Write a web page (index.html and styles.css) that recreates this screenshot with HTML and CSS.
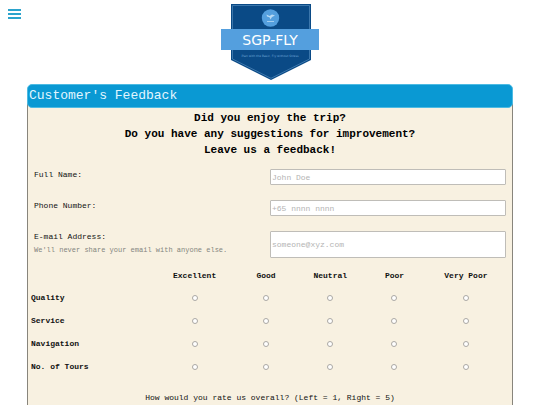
FILE: index.html
```html
<!DOCTYPE html>
<html lang="en">
<head>
    <meta charset="UTF-8">
    <meta name="viewport" content="width=device-width, initial-scale=1.0">
    <title>SGP-FLY | Customer's Feedback</title>
    <link rel="stylesheet" href="styles.css">
</head>
<body>

    <!-- Menu button and logo -->
    <header class="topbar">
        <button type="button" class="menu-btn" aria-label="Open menu">
            <span></span>
            <span></span>
            <span></span>
        </button>
        <a class="logo" href="#">
            <svg width="98" height="77" viewBox="0 0 98 77" role="img" aria-label="SGP-FLY">
                <path d="M10 0H90V56L50 76L10 56Z" fill="#0a4a86"/>
                <path d="M11.500 1.500H88.500V55L50 74.300L11.500 55Z" fill="none" stroke="#5c93c4" stroke-width="0.600"/>
                <circle cx="49.500" cy="14" r="8.700" fill="#549fde"/>
                <path d="M45.500 10.500L48.500 12L51 10.500L54 11.500L51 13L49.500 15.500L48.500 13.200L46 12.600Z" fill="#b9daf4"/>
                <path d="M46 17.500H53" stroke="#b9daf4" stroke-width="0.800"/>
                <rect x="0" y="25" width="98" height="21" fill="#549fde"/>
                <text class="logo-name" x="49" y="41" text-anchor="middle">SGP-FLY</text>
                <text class="logo-tagline" x="49" y="53" text-anchor="middle">Plan with the Basic, Fly without Stress</text>
            </svg>
        </a>
    </header>

    <main class="container">
        <h1 class="form-title">Customer's Feedback</h1>

        <form class="feedback-form" action="#" method="POST">
            <h2 class="intro">
                Did you enjoy the trip?<br>
                Do you have any suggestions for improvement?<br>
                Leave us a feedback!
            </h2>

            <!-- Contact details -->
            <div class="fields">
                <div class="field">
                    <label for="name">Full Name:</label>
                    <input type="text" id="name" name="name" placeholder="John Doe">
                </div>
                <div class="field">
                    <label for="phone">Phone Number:</label>
                    <input type="tel" id="phone" name="phone" placeholder="+65 nnnn nnnn">
                </div>
                <div class="field">
                    <div>
                        <label for="email">E-mail Address:</label>
                        <small id="emailHelp">We'll never share your email with anyone else.</small>
                    </div>
                    <input type="email" id="email" name="email" placeholder="someone@xyz.com" aria-describedby="emailHelp">
                </div>
            </div>

            <!-- Ratings -->
            <table class="ratings">
                <thead>
                    <tr>
                        <td class="topic"></td>
                        <th scope="col" class="wide">Excellent</th>
                        <th scope="col">Good</th>
                        <th scope="col" class="narrow">Neutral</th>
                        <th scope="col">Poor</th>
                        <th scope="col" class="wide">Very Poor</th>
                    </tr>
                </thead>
                <tbody>
                    <tr>
                        <th scope="row">Quality</th>
                        <td><input type="radio" name="quality" value="5" aria-label="Quality: Excellent"></td>
                        <td><input type="radio" name="quality" value="4" aria-label="Quality: Good"></td>
                        <td><input type="radio" name="quality" value="3" aria-label="Quality: Neutral"></td>
                        <td><input type="radio" name="quality" value="2" aria-label="Quality: Poor"></td>
                        <td><input type="radio" name="quality" value="1" aria-label="Quality: Very Poor"></td>
                    </tr>
                    <tr>
                        <th scope="row">Service</th>
                        <td><input type="radio" name="service" value="5" aria-label="Service: Excellent"></td>
                        <td><input type="radio" name="service" value="4" aria-label="Service: Good"></td>
                        <td><input type="radio" name="service" value="3" aria-label="Service: Neutral"></td>
                        <td><input type="radio" name="service" value="2" aria-label="Service: Poor"></td>
                        <td><input type="radio" name="service" value="1" aria-label="Service: Very Poor"></td>
                    </tr>
                    <tr>
                        <th scope="row">Navigation</th>
                        <td><input type="radio" name="navigation" value="5" aria-label="Navigation: Excellent"></td>
                        <td><input type="radio" name="navigation" value="4" aria-label="Navigation: Good"></td>
                        <td><input type="radio" name="navigation" value="3" aria-label="Navigation: Neutral"></td>
                        <td><input type="radio" name="navigation" value="2" aria-label="Navigation: Poor"></td>
                        <td><input type="radio" name="navigation" value="1" aria-label="Navigation: Very Poor"></td>
                    </tr>
                    <tr>
                        <th scope="row">No. of Tours</th>
                        <td><input type="radio" name="tours" value="5" aria-label="No. of Tours: Excellent"></td>
                        <td><input type="radio" name="tours" value="4" aria-label="No. of Tours: Good"></td>
                        <td><input type="radio" name="tours" value="3" aria-label="No. of Tours: Neutral"></td>
                        <td><input type="radio" name="tours" value="2" aria-label="No. of Tours: Poor"></td>
                        <td><input type="radio" name="tours" value="1" aria-label="No. of Tours: Very Poor"></td>
                    </tr>
                </tbody>
            </table>

            <p class="overall">How would you rate us overall? (Left = 1, Right = 5)</p>
        </form>
    </main>

</body>
</html>
```
FILE: styles.css
```css
* {
    margin: 0;
    padding: 0;
    box-sizing: border-box;
}

body {
    font-family: "Liberation Mono", "Courier New", monospace;
    font-size: 8px;
    line-height: 12px;
    background-color: #fff;
    color: #111;
}

/* Top bar */
.topbar {
    display: grid;
    grid-template-columns: 1fr auto 1fr;
    align-items: start;
    padding: 4px 8px 3px;
}

.menu-btn {
    display: flex;
    flex-direction: column;
    gap: 2px;
    width: 13px;
    margin-top: 5px;
    border: none;
    background: none;
    cursor: pointer;
}

.menu-btn span {
    width: 100%;
    height: 2px;
    background-color: #2ba3cc;
}

.logo svg {
    display: block;
}

.logo-name {
    font-family: "DejaVu Sans", sans-serif;
    font-size: 14px;
    fill: #fff;
}

.logo-tagline {
    font-family: "DejaVu Sans", sans-serif;
    font-size: 3px;
    fill: #6fa6d6;
}

/* Feedback form */
.container {
    width: 90%;
    margin: 0 auto;
}

.form-title {
    position: relative;
    padding: 3px 1px 4px;
    background-color: #0a99d3;
    border: 1px solid #4dbbe3;
    border-radius: 5px;
    color: #e2f6ff;
    font-size: 13px;
    font-weight: normal;
    line-height: 15px;
}

.feedback-form {
    margin-top: -6px;
    padding-top: 7px;
    padding-bottom: 24px;
    background-color: #f8f1e1;
    border: 1px solid #88857c;
}

.intro {
    color: #000;
    font-size: 11px;
    line-height: 16px;
    text-align: center;
}

.fields {
    display: flex;
    flex-direction: column;
    gap: 15px;
    padding: 11px 6px 8px;
}

.field {
    display: grid;
    grid-template-columns: 1fr 1fr;
}

.field label {
    display: block;
}

.field small {
    display: block;
    color: #84867f;
    font-size: 7px;
    line-height: 15px;
}

.field input {
    width: 100%;
    min-height: 16px;
    padding: 0 1px;
    background-color: #fff;
    border: 1px solid #bfbdb8;
    border-radius: 1px;
    font-family: inherit;
    font-size: 8px;
}

.field input::placeholder {
    color: #b4b4b4;
}

/* Rating table */
.ratings {
    width: 100%;
    padding-right: 8px;
    border-spacing: 0;
    table-layout: fixed;
}

.ratings th,
.ratings td {
    width: 14%;
    height: 23px;
    text-align: center;
    vertical-align: middle;
}

.ratings thead th,
.ratings thead td {
    height: 20px;
}

.ratings thead .topic {
    width: 27%;
}

.ratings thead .wide {
    width: 16%;
}

.ratings thead .narrow {
    width: 13%;
}

.ratings th[scope="row"] {
    padding-left: 3px;
    text-align: left;
}

.ratings input {
    appearance: none;
    display: block;
    width: 6px;
    height: 6px;
    margin: 0 auto;
    background-color: #fff;
    border: 1px solid #aaa8a3;
    border-radius: 50%;
}

.ratings input:checked {
    background-color: #0a99d3;
}

.overall {
    padding-top: 14px;
    text-align: center;
}
```
